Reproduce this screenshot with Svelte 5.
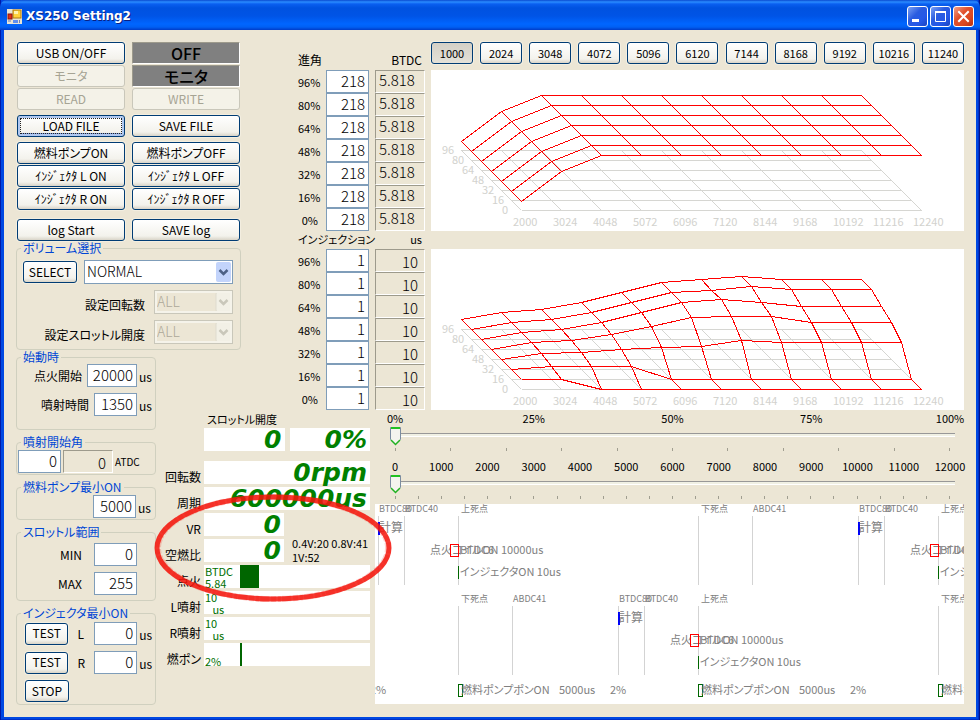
<script>
	const levels = [96, 80, 64, 48, 32, 16, 0];
	const rpmSteps = [1000, 2024, 3048, 4072, 5096, 6120, 7144, 8168, 9192, 10216, 11240];
	const rpmAxis = [2000, 3024, 4048, 5072, 6096, 7120, 8144, 9168, 10192, 11216, 12240];

	// one row per throttle level, one value per rpm column
	const advanceMap = levels.map(() => [9, 39, 55, 55, 55, 55, 55, 55, 55, 55, 55]);
	const injectionMap = [
		[10, 17, 20, 27, 37, 47, 50, 53, 50, 50, 50],
		[10, 17, 20, 27, 37, 47, 49, 53, 50, 50, 50],
		[10, 17, 20, 27, 37, 47, 50, 47, 43, 43, 43],
		[10, 17, 19, 25, 33, 42, 43, 43, 37, 37, 37],
		[10, 16, 17, 20, 22, 23, 29, 27, 27, 27, 27],
		[10, 13, 13, 13, 0, 0, 0, 0, 0, 0, 0],
		[10, 10, 0, 0, 0, 0, 0, 0, 0, 0, 0]
	];
	const flat = levels.map(() => rpmAxis.map(() => 0));

	let selectedRpm = $state(1000);
	let volume = $state('NORMAL');
	let advance = $state(levels.map(() => 218));
	let injection = $state(levels.map(() => 1));
	let throttle = $state(0);
	let rpm = $state(0);

	function point(map, row, col) {
		return `${30.5 + row * 10 + col * 40},${80.5 + row * 10 - map[row][col]}`;
	}

	function meshLines(map) {
		const rows = map.map((r, i) => r.map((_, j) => point(map, i, j)).join(' '));
		const cols = rpmAxis.map((_, j) => map.map((_, i) => point(map, i, j)).join(' '));
		return [...rows, ...cols];
	}

	const marks = [
		{ x: 3, y: 0, text: 'BTDC80' },
		{ x: 29, y: 0, text: 'BTDC40' },
		{ x: 83, y: 0, text: '上死点' },
		{ x: 323, y: 0, text: '下死点' },
		{ x: 377, y: 0, text: 'ABDC41' },
		{ x: 483, y: 0, text: 'BTDC80' },
		{ x: 509, y: 0, text: 'BTDC40' },
		{ x: 563, y: 0, text: '上死点' },
		{ x: 83, y: 90, text: '下死点' },
		{ x: 137, y: 90, text: 'ABDC41' },
		{ x: 243, y: 90, text: 'BTDC80' },
		{ x: 269, y: 90, text: 'BTDC40' },
		{ x: 323, y: 90, text: '上死点' },
		{ x: 563, y: 90, text: '下死点' }
	];
	const calcs = [
		{ x: 3, y: 0 },
		{ x: 483, y: 0 },
		{ x: 243, y: 90 }
	];
	const sparks = [
		{ x: 83, y: 0 },
		{ x: 563, y: 0 },
		{ x: 323, y: 90 }
	];
	const pumps = [-157, 83, 323, 563];
</script>

{#snippet mesh(map, name)}
	<svg class="chart" viewBox="0 0 533 161" role="img" aria-label={name}>
		{#each meshLines(flat) as points}
			<polyline {points} stroke="#d6d6d2" />
		{/each}
		{#each meshLines(map) as points}
			<polyline {points} stroke="#f00" />
		{/each}
		{#each levels as level, i}
			<text x={11 + i * 10} y={84 + i * 10}>{level}</text>
		{/each}
		{#each rpmAxis as value, i}
			<text x={82 + i * 40} y="156">{value}</text>
		{/each}
	</svg>
{/snippet}

<div class="window">
	<header class="titlebar">
		<svg class="app-icon" width="15" height="15" viewBox="0 0 15 15">
			<rect width="15" height="15" fill="#e8e4d4" />
			<rect x="6" y="1" width="8" height="8" fill="#ffd23c" stroke="#b07a10" />
			<rect x="7" y="2" width="4" height="3" fill="#fff3b0" />
			<rect x="1" y="5" width="4" height="5" fill="#e0301a" stroke="#8c1408" />
			<rect x="6" y="11" width="5" height="3" fill="#5b8ef0" />
			<path d="M1 12h3M12.500 11v3" stroke="#6a7fb8" />
		</svg>
		<h1>XS250 Setting2</h1>
		<button class="caption" aria-label="最小化">
			<svg width="19" height="19" viewBox="0 0 19 19"><path d="M4 13.500h7" stroke="#fff" stroke-width="3" /></svg>
		</button>
		<button class="caption" aria-label="最大化">
			<svg width="19" height="19" viewBox="0 0 19 19">
				<path d="M4.500 4.500h10v10h-10z" fill="none" stroke="#fff" />
				<path d="M4 5h11" stroke="#fff" stroke-width="2" />
			</svg>
		</button>
		<button class="caption close" aria-label="閉じる">
			<svg width="19" height="19" viewBox="0 0 19 19">
				<path d="M5 5l9 9M14 5l-9 9" stroke="#fff" stroke-width="2" stroke-linecap="square" />
			</svg>
		</button>
	</header>

	<main>
		<section class="controls">
			<div class="pad">
				<button>USB ON/OFF</button>
				<output class="status">OFF</output>
				<button disabled>モニタ</button>
				<output class="status">モニタ</output>
				<button disabled>READ</button>
				<button disabled>WRITE</button>
			</div>
			<div class="pad">
				<button class="focused">LOAD FILE</button>
				<button>SAVE FILE</button>
			</div>
			<div class="pad">
				<button>燃料ポンプON</button>
				<button>燃料ポンプOFF</button>
				<button>ｲﾝｼﾞｪｸﾀ L ON</button>
				<button>ｲﾝｼﾞｪｸﾀ L OFF</button>
				<button>ｲﾝｼﾞｪｸﾀ R ON</button>
				<button>ｲﾝｼﾞｪｸﾀ R OFF</button>
			</div>
			<div class="pad logs">
				<button>log Start</button>
				<button>SAVE log</button>
			</div>
			<fieldset class="volume">
				<legend>ボリューム選択</legend>
				<div class="line">
					<button class="select-btn">SELECT</button>
					<select class="wide" aria-label="ボリューム選択" bind:value={volume}>
						<option>NORMAL</option>
					</select>
				</div>
				<div class="line">
					<label for="set-rpm">設定回転数</label>
					<select id="set-rpm" disabled><option>ALL</option></select>
				</div>
				<div class="line">
					<label for="set-throttle">設定スロットル開度</label>
					<select id="set-throttle" disabled><option>ALL</option></select>
				</div>
			</fieldset>
		</section>

		<section class="groups">
			<fieldset class="startup">
				<legend>始動時</legend>
				<div class="line">
					<label for="ign-start">点火開始</label>
					<input id="ign-start" class="long" value="20000" />
					<span class="unit">us</span>
				</div>
				<div class="line">
					<label for="inj-time">噴射時間</label>
					<input id="inj-time" value="1350" />
					<span class="unit">us</span>
				</div>
			</fieldset>
			<fieldset class="angle">
				<legend>噴射開始角</legend>
				<div class="line">
					<input aria-label="噴射開始角" value="0" />
					<output class="sunken low">0</output>
					<span class="unit atdc">ATDC</span>
				</div>
			</fieldset>
			<fieldset>
				<legend>燃料ポンプ最小ON</legend>
				<div class="line">
					<input aria-label="燃料ポンプ最小ON" value="5000" />
					<span class="unit">us</span>
				</div>
			</fieldset>
			<fieldset class="range">
				<legend>スロットル範囲</legend>
				<div class="line">
					<label for="thr-min">MIN</label>
					<input id="thr-min" value="0" />
					<span class="unit"></span>
				</div>
				<div class="line">
					<label for="thr-max">MAX</label>
					<input id="thr-max" value="255" />
					<span class="unit"></span>
				</div>
			</fieldset>
			<fieldset class="test">
				<legend>インジェクタ最小ON</legend>
				<div class="line">
					<button>TEST</button>
					<label for="inj-l">L</label>
					<input id="inj-l" value="0" />
					<span class="unit">us</span>
				</div>
				<div class="line">
					<button>TEST</button>
					<label for="inj-r">R</label>
					<input id="inj-r" value="0" />
					<span class="unit">us</span>
				</div>
				<div class="line">
					<button>STOP</button>
				</div>
			</fieldset>
		</section>

		<section class="maps">
			<div class="values">
				<div class="values-head"><span>進角</span><span>BTDC</span></div>
				{#each levels as level, i}
					<div class="value-row">
						<label for="adv-{level}">{level}%</label>
						<input id="adv-{level}" bind:value={advance[i]} />
						<output class="sunken left">5.818</output>
					</div>
				{/each}
				<div class="values-head small"><span>インジェクション</span><span>us</span></div>
				{#each levels as level, i}
					<div class="value-row">
						<label for="inj-{level}">{level}%</label>
						<input id="inj-{level}" bind:value={injection[i]} />
						<output class="sunken low">10</output>
					</div>
				{/each}
			</div>
			<div class="charts">
				<div class="rpm-buttons">
					{#each rpmSteps as step}
						<button class:pressed={step === selectedRpm} onclick={() => (selectedRpm = step)}>{step}</button>
					{/each}
				</div>
				{@render mesh(advanceMap, '進角')}
				{@render mesh(injectionMap, 'インジェクション')}
			</div>
		</section>

		<section class="readings">
			<h2>スロットル開度</h2>
			<div class="reading throttle">
				<output class="big">0</output>
				<output class="big">0%</output>
			</div>
			<div class="reading"><span>回転数</span><output class="big">0rpm</output></div>
			<div class="reading"><span>周期</span><output class="big">600000us</output></div>
			<div class="reading"><span>VR</span><output class="big half">0</output></div>
			<div class="reading">
				<span>空燃比</span>
				<output class="big half">0</output>
				<p>0.4V:20 0.8V:41<br />1V:52</p>
			</div>
			<div class="reading">
				<span>点火</span>
				<div class="meter"><small>BTDC<br />5.84</small><i class="block"></i></div>
			</div>
			<div class="reading">
				<span>L噴射</span>
				<div class="meter"><small>10<br />&nbsp;&nbsp;&nbsp;us</small></div>
			</div>
			<div class="reading">
				<span>R噴射</span>
				<div class="meter"><small>10<br />&nbsp;&nbsp;&nbsp;us</small></div>
			</div>
			<div class="reading">
				<span>燃ポン</span>
				<div class="meter"><small><br />2%</small><i class="needle"></i></div>
			</div>
			<!-- hand-drawn marker around VR and air/fuel ratio -->
			<svg class="marker" width="242" height="112" viewBox="0 0 242 112">
				<ellipse cx="121" cy="56" rx="116" ry="51" />
				<ellipse class="rough" cx="121" cy="56" rx="115" ry="51" />
			</svg>
		</section>

		<section class="timing">
			<div class="slider">
				<div class="scale">
					{#each ['0%', '25%', '50%', '75%', '100%'] as label}<span>{label}</span>{/each}
				</div>
				<input type="range" min="0" max="100" aria-label="スロットル開度" bind:value={throttle} />
				<div class="ticks">{#each { length: 11 } as _}<i></i>{/each}</div>
			</div>
			<div class="slider">
				<div class="scale">
					{#each { length: 13 } as _, i}<span>{i * 1000}</span>{/each}
				</div>
				<input type="range" min="0" max="12000" aria-label="回転数" bind:value={rpm} />
				<div class="ticks">{#each { length: 25 } as _}<i></i>{/each}</div>
			</div>

			<svg class="timeline" viewBox="0 0 589 200" role="img" aria-label="タイミング">
				{#each marks as m}
					<path d="M{m.x + 0.5} {m.y + 12}v69" stroke="#d3d3d3" />
					<text class="tiny" x={m.text.length > 3 ? m.x + 1 : m.x + 3} y={m.y + 8}>{m.text}</text>
				{/each}
				{#each calcs as c}
					<rect x={c.x} y={c.y + 18} width="2" height="13" fill="#00f" />
					<text class="calc" x={c.x + 1} y={c.y + 28}>計算</text>
				{/each}
				{#each sparks as s}
					<text x={s.x - 28} y={s.y + 50}>点火コイルON 10000us</text>
					<text x={s.x + 2} y={s.y + 50}>BTDC6</text>
					<rect x={s.x - 7.5} y={s.y + 40.5} width="8" height="12" fill="none" stroke="#f00" />
					<rect x={s.x} y={s.y + 62} width="1" height="13" fill="#060" />
					<text x={s.x + 2} y={s.y + 72}>インジェクタON 10us</text>
				{/each}
				{#each pumps as x}
					<rect x={x + 0.5} y="180.500" width="4" height="12" fill="none" stroke="#060" />
					<text x={x + 3} y="190">燃料ポンプポンON</text>
					<text x={x + 101} y="190">5000us</text>
					<text x={x + 152} y="190">2%</text>
				{/each}
			</svg>
		</section>
	</main>
</div>

<style>
	:global(body) {
		margin: 0;
	}

	.window {
		--face: #ece6d5;
		--num: 300 15px 'Noto Sans CJK JP', sans-serif;
		box-sizing: border-box;
		min-height: 100vh;
		display: flex;
		flex-direction: column;
		padding: 0 4px 4px;
		background: #0048e2;
		box-shadow: inset 1px 0 #0019a8, inset -1px -1px #00138c, inset -2px -2px #0030c8;
		font: 12px/14px 'Noto Sans CJK JP', sans-serif;
		font-feature-settings: 'palt';
		color: #000;
	}

	.window * {
		box-sizing: border-box;
	}

	/* title bar */
	.titlebar {
		height: 30px;
		margin: 0 -4px;
		padding: 2px 6px 0 7px;
		display: flex;
		align-items: center;
		gap: 2px;
		border-radius: 7px 7px 0 0;
		background: linear-gradient(#0a4ad0 0, #2a8cff 2px, #0a5ff0 4px, #0052e0 8px, #0054e6 16px, #0066ff 24px, #0060f4 27px, #003cc8 30px);
	}

	h1 {
		flex: 1;
		margin: 0 0 0 2px;
		font: bold 12px/16px 'DejaVu Sans', sans-serif;
		color: #fff;
		text-shadow: 1px 1px #0a1f80;
	}

	.caption {
		width: 21px;
		height: 21px;
		padding: 0;
		display: grid;
		place-items: center;
		border: 1px solid #fff;
		border-radius: 3px;
		background: linear-gradient(135deg, #7aa0f4, #2a5ce0 40%, #2458e8 70%, #1a44c0);
	}

	.caption.close {
		background: linear-gradient(135deg, #f0a088, #e0502c 40%, #dc4820 70%, #b83010);
	}

	main {
		flex: 1;
		display: grid;
		grid-template-columns: 148px 134px 77px 1fr;
		grid-template-rows: auto auto 1fr;
		padding: 12px;
		background: var(--face);
	}

	/* buttons */
	main button {
		height: 22px;
		padding: 0 0 1px;
		border: 1px solid #003c74;
		border-radius: 3px;
		background: linear-gradient(#fff, #f3f2ec 80%, #d9d4c8);
		box-shadow: 0 0 0 1px #f3eee0;
		font: inherit;
		font-feature-settings: inherit;
		color: #000;
	}

	main button:disabled {
		border-color: #c9c7ba;
		background: #f4f2e8;
		box-shadow: none;
		color: #a6a494;
	}

	main button.focused {
		box-shadow: inset 0 0 0 2px #b0c8f0, inset 0 -3px #7f9fe0;
		outline: 1px dotted #222;
		outline-offset: -4px;
	}

	main button.pressed {
		background: linear-gradient(#d4d0c6, #e4e1d8);
	}

	.controls {
		grid-area: 1 / 1 / 2 / 3;
		width: 225px;
		display: flex;
		flex-direction: column;
		gap: 5px;
	}

	.pad {
		display: grid;
		grid-template-columns: 1fr 1fr;
		gap: 1px 7px;
		padding: 0 1px;
	}

	.logs {
		margin-top: 4px;
	}

	.status {
		height: 22px;
		border: 1px solid #9d9a8c;
		border-color: #9d9a8c #fff #fff #9d9a8c;
		background: #808080;
		font-weight: 500;
		font-size: 16px;
		line-height: 20px;
		text-align: center;
	}

	/* group boxes */
	fieldset {
		min-width: 0;
		margin: 0;
		padding: 1px 3px 1px 1px;
		border: 1px solid #d0d0bf;
		border-radius: 4px;
		display: flex;
		flex-direction: column;
		gap: 6px;
	}

	legend {
		margin-left: 3px;
		padding: 0 2px;
		color: #0046d5;
		line-height: 14px;
	}

	.line {
		display: flex;
		justify-content: flex-end;
		align-items: center;
	}

	.line label {
		margin-right: 5px;
	}

	.volume {
		margin-top: -5px;
		padding: 5px 7px 5px 1px;
	}

	.volume .line {
		padding-left: 5px;
	}

	.volume label {
		margin-right: 9px;
		padding-top: 5px;
	}

	.select-btn {
		width: 54px;
		margin-right: auto;
	}

	select {
		appearance: none;
		width: 79px;
		height: 24px;
		padding: 0 20px 2px 2px;
		border: 1px solid #7f9db9;
		border-radius: 0;
		background: #fff url("data:image/svg+xml,%3Csvg xmlns='http://www.w3.org/2000/svg' width='17' height='22'%3E%3Crect x='1' y='1' width='15' height='20' rx='2' fill='%23c3d4fb'/%3E%3Cpath d='M4.500 9l4 4 4-4' fill='none' stroke='%234d6185' stroke-width='2.500'/%3E%3C/svg%3E") right center no-repeat;
		font: var(--num);
		font-size: 14px;
		color: #000;
	}

	select.wide {
		width: 149px;
	}

	select:disabled {
		opacity: 1;
		border-color: #c9c7ba;
		background: var(--face) url("data:image/svg+xml,%3Csvg xmlns='http://www.w3.org/2000/svg' width='17' height='22'%3E%3Crect x='1' y='1' width='15' height='20' rx='2' fill='%23f2f0e6' stroke='%23dedbce'/%3E%3Cpath d='M4.500 9l4 4 4-4' fill='none' stroke='%23c9c7ba' stroke-width='2.500'/%3E%3C/svg%3E") right center no-repeat;
		box-shadow: inset 0 0 0 2px #f5f3ea;
		color: #aca899;
	}

	input:not([type='range']) {
		width: 43px;
		height: 23px;
		padding: 0 3px 3px;
		border: 1px solid #7f9db9;
		background: #fff;
		font: var(--num);
		line-height: 18px;
		text-align: right;
		color: #000;
	}

	input.long:not([type='range']) {
		width: 50px;
	}

	.sunken {
		width: 50px;
		height: 23px;
		padding: 0 6px 0 3px;
		border: 1px solid #9d9a8c;
		border-color: #9d9a8c #fff #fff #9d9a8c;
		font: var(--num);
		line-height: 18px;
		text-align: right;
	}

	.sunken.left {
		text-align: left;
	}

	.sunken.low {
		padding-top: 3px;
	}

	.unit {
		width: 14px;
		margin-left: 2px;
		padding-top: 2px;
	}

	.groups {
		grid-area: 2 / 1 / 4 / 2;
		width: 140px;
		display: flex;
		flex-direction: column;
		gap: 5px;
	}

	.startup {
		padding: 0 2px 13px 1px;
	}

	.angle .line {
		gap: 2px;
		justify-content: flex-start;
	}

	.atdc {
		width: auto;
		margin: 0;
		padding: 0;
		font-size: 10px;
	}

	.range {
		padding: 4px 2px 5px 1px;
	}

	.range label {
		margin-right: 12px;
	}

	.test {
		padding: 2px 2px 2px 1px;
	}

	.test .line {
		justify-content: flex-start;
		padding-left: 7px;
	}

	.test label {
		width: 17px;
		margin: 0 0 0 9px;
	}

	.test button {
		width: 44px;
	}

	/* map tables and charts */
	.maps {
		grid-area: 1 / 3 / 3 / 5;
		display: flex;
		gap: 6px;
	}

	.values-head {
		height: 18px;
		padding-right: 3px;
		display: flex;
		justify-content: space-between;
		line-height: 16px;
	}

	.values-head.small {
		font-size: 11px;
	}

	.values {
		width: 127px;
		padding-top: 10px;
	}

	.value-row {
		display: flex;
	}

	.value-row label {
		width: 28px;
		padding: 5px 8px 0 0;
		font-size: 11px;
		text-align: right;
	}

	.value-row .sunken {
		margin-left: 6px;
	}

	.charts {
		flex: 1;
		display: flex;
		flex-direction: column;
		gap: 18px;
	}

	.rpm-buttons {
		display: flex;
		justify-content: space-between;
		margin-bottom: -12px;
	}

	.rpm-buttons button {
		width: 42px;
		font-size: 11px;
	}

	.chart,
	.timeline {
		display: block;
		width: 100%;
		background: #fff;
	}

	.chart polyline {
		fill: none;
		shape-rendering: crispEdges;
	}

	.chart text {
		fill: #d2d2ce;
		font-size: 11px;
	}

	/* live readings */
	.readings {
		grid-area: 3 / 2 / 4 / 4;
		position: relative;
		width: 206px;
		display: flex;
		flex-direction: column;
		gap: 3px;
	}

	h2 {
		margin: 0 0 -3px 43px;
		font: inherit;
		font-size: 11px;
		line-height: 18px;
	}

	.reading {
		display: flex;
		align-items: flex-end;
		gap: 3px;
	}

	.reading > span {
		width: 37px;
		text-align: right;
		white-space: nowrap;
	}

	.throttle {
		margin: 0 0 7px 40px;
		gap: 5px;
	}

	.big {
		flex: 1;
		height: 23px;
		padding-right: 3px;
		background: #fff;
		font: italic bold 25px/24px 'DejaVu Sans', sans-serif;
		text-align: right;
		color: #008000;
	}

	.big.half {
		flex: 0 0 80px;
	}

	.reading p {
		margin: -4px 0 -2px 5px;
		font-size: 11px;
		white-space: nowrap;
	}

	.meter {
		flex: 1;
		height: 23px;
		display: flex;
		background: #fff;
		color: #007000;
	}

	.meter small {
		width: 36px;
		padding-left: 1px;
		font-size: 11px;
		line-height: 12px;
	}

	.meter i {
		background: #060;
	}

	.block {
		width: 19px;
	}

	.needle {
		width: 2px;
	}

	.marker {
		position: absolute;
		left: -12px;
		top: 82px;
		pointer-events: none;
	}

	.marker ellipse {
		fill: none;
		stroke: #f5150c;
		stroke-width: 5;
		opacity: 0.85;
	}

	.marker .rough {
		stroke-width: 6;
		stroke-dasharray: 5 2 9 1 3 2;
		opacity: 0.2;
	}

	/* sliders and timing diagram */
	.timing {
		grid-area: 3 / 4 / 4 / 5;
		padding-top: 1px;
	}

	.slider {
		padding: 0 9px 8px 15px;
	}

	.slider + .slider {
		padding-bottom: 5px;
	}

	.scale,
	.ticks {
		display: flex;
		justify-content: space-between;
		padding: 0 5px;
	}

	.scale {
		height: 15px;
	}

	.scale span {
		width: 0;
		display: flex;
		justify-content: center;
		font-size: 11px;
	}

	.ticks {
		margin-top: 2px;
	}

	.ticks i {
		width: 1px;
		height: 3px;
		background: #a09e90;
	}

	input[type='range'] {
		appearance: none;
		display: block;
		width: 100%;
		height: 20px;
		margin: 0;
		background: linear-gradient(#989898 0 1px, #f0f0e4 1px 3px, #fff 3px 4px) 0 7px / 100% 4px no-repeat;
	}

	input[type='range']::-webkit-slider-thumb {
		appearance: none;
		width: 11px;
		height: 20px;
		border: 0;
		background: url("data:image/svg+xml,%3Csvg xmlns='http://www.w3.org/2000/svg' width='11' height='20'%3E%3Cpath d='M.5 1.500h10v12l-5 5-5-5z' fill='%23f4f4ee' stroke='%237b8ca0'/%3E%3Cpath d='M1 2h9' stroke='%2321c121' stroke-width='2'/%3E%3Cpath d='M1 14l4.500 4.500L10 14' fill='none' stroke='%2321b121' stroke-width='1.500'/%3E%3C/svg%3E");
	}

	.timeline text {
		fill: #808080;
		font-size: 11px;
	}

	.timeline .calc {
		font-size: 12px;
	}

	.timeline .tiny {
		font-size: 9px;
	}
</style>
